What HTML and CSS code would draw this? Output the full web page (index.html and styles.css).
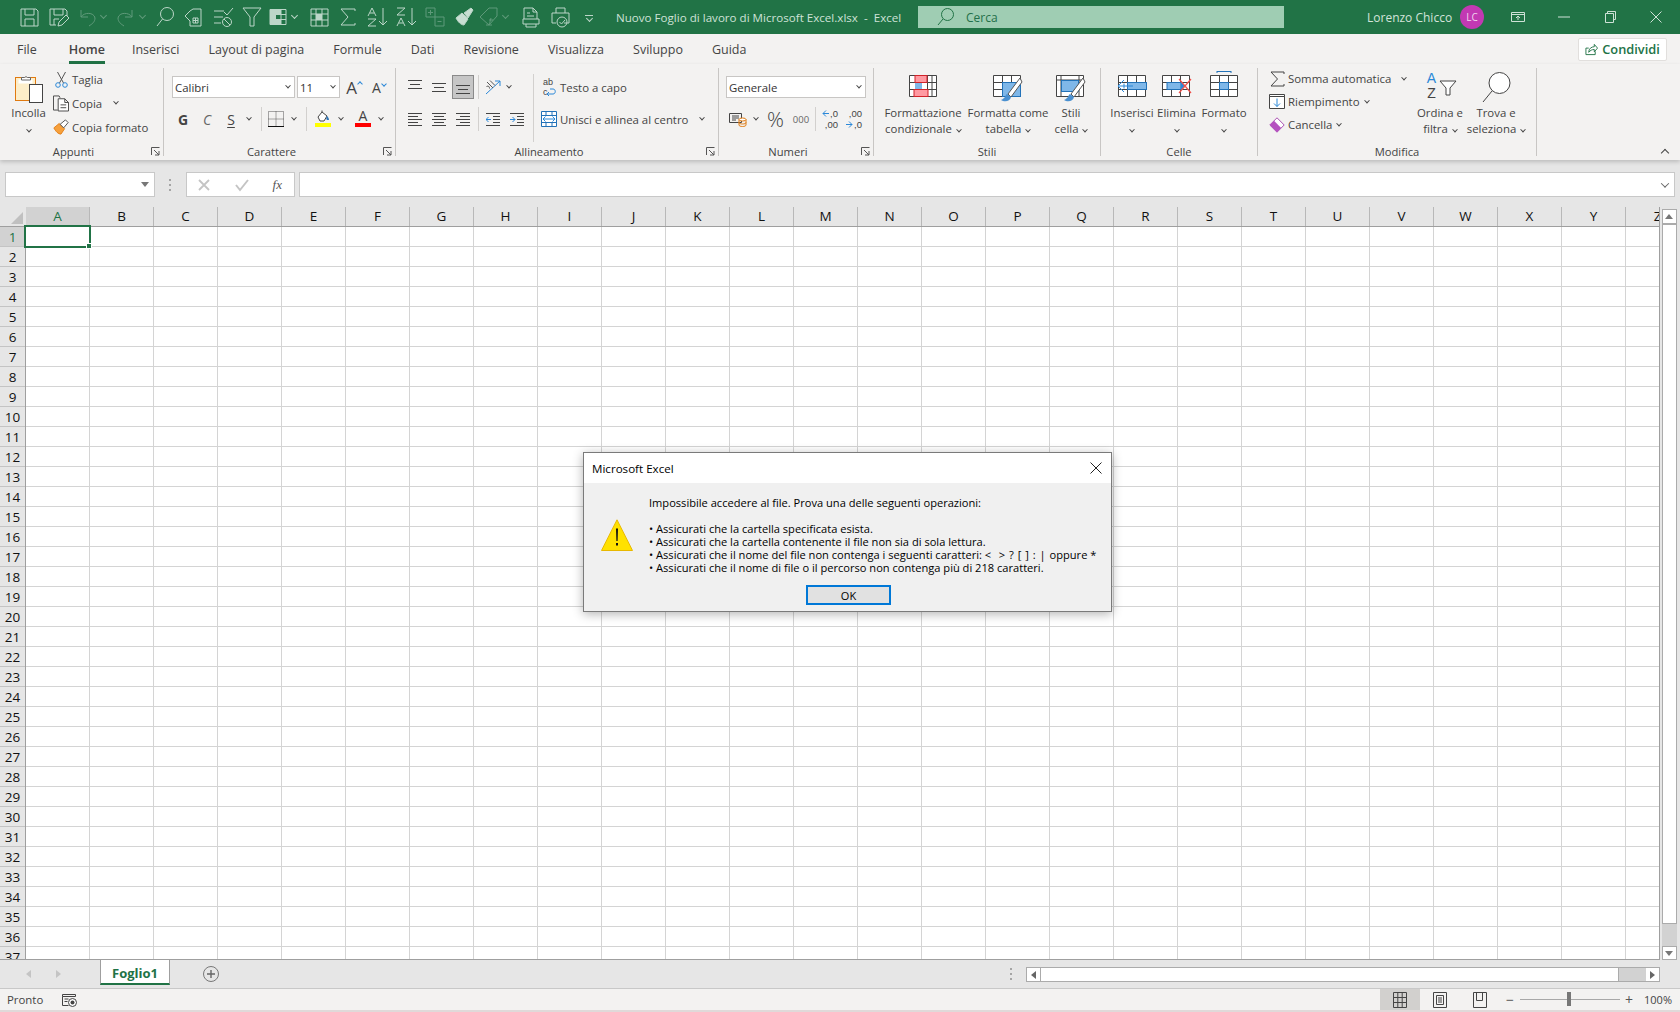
FILE: index.html
```html
<!DOCTYPE html>
<html lang="it">
<head>
  <meta charset="UTF-8" />
  <title>Nuovo Foglio di lavoro di Microsoft Excel.xlsx - Excel</title>
  <link rel="stylesheet" href="styles.css">
</head>
<body>

<!-- Title bar -->
<header class="titlebar">
  <div class="qat">
    <svg class="q" viewBox="0 0 24 24"><path d="M4 4h15l2 2v15H4z M8 4v6h9V4 M8 21v-7h9v7"/></svg>
    <svg class="q" viewBox="0 0 24 24"><path d="M4 20V4h15l2 2v5 M8 4v6h9V4 M8 20v-6h5 M4 20h6 M12 21l1-4 7-7 3 3-7 7z"/></svg>
    <svg class="q dim" viewBox="0 0 24 24"><path d="M6 5v7h7 M6 12c3-5 13-5 14 1 0 4-3 6-6 8"/></svg><span class="qd dim"></span>
    <svg class="q dim" viewBox="0 0 24 24"><path d="M18 5v7h-7 M18 12C15 7 5 7 4 13c0 4 3 6 6 8"/></svg><span class="qd dim"></span>
    <svg class="q" viewBox="0 0 24 24"><circle cx="14" cy="9" r="6.500"/><path d="M9.500 14 4 21"/></svg>
    <svg class="q" viewBox="0 0 24 24"><path d="M11 4h8v17H8v-5L3 11l5-5z M11 13h5v5h-5z M13.500 13v5 M11 15.500h5"/></svg>
    <svg class="q" viewBox="0 0 24 24"><path d="M3 6h10 M3 12h9 M3 18h7 M13 7l3 3 6-7"/><circle cx="16" cy="17" r="4.500"/><path d="M13 14l6 6"/></svg>
    <svg class="q" viewBox="0 0 24 24"><path d="M3 3h18l-7 9v9h-4v-9z"/></svg>
    <svg class="q ml-n3" viewBox="0 0 24 24"><path d="M4 4.500h16v15H4z M9.500 4.500v15 M15 4.500v15 M4 9.500h16 M4 14.500h16"/><path class="fill-s" d="M4 4.500h5.500v15H4z M9.500 4.500H15v5H9.500z M9.500 14.500H15v5H9.500z"/></svg><span class="qd"></span>
    <svg class="q ml-2" viewBox="0 0 24 24"><path d="M4 4h17v17H4z M4 9h17 M4 15h17 M9 4v17 M15 4v17"/><path class="fill-s" d="M9 9h6v6H9z"/></svg>
    <svg class="q" viewBox="0 0 24 24"><path d="M19 6V4H5l7 8-7 8h14v-2"/></svg>
    <svg class="q" viewBox="0 0 24 24"><path d="M18 3v17 M14 16l4 4 4-4 M5 8h4 M3 11l4-8 4 8 M3 14h8l-8 7h8"/></svg>
    <svg class="q" viewBox="0 0 24 24"><path d="M18 3v17 M14 16l4 4 4-4 M3 3h8l-8 7h8 M3 21l4-8 4 8 M5 18h4"/></svg>
    <svg class="q dim" viewBox="0 0 24 24"><path d="M3 3h9v9H3z M12 12h9v9h-9z M7.500 5v5 M5 7.500h5 M14.500 16.500h4"/></svg>
    <svg class="q" viewBox="0 0 24 24"><path class="fill" d="M4 13l6-5 6 6-4 6c-3 0-6-3-8-7z"/><path class="fill" d="M12 8l7-5 2 2-5 8z"/></svg>
    <svg class="q ml-n4 dim" viewBox="0 0 24 24"><path d="M3 12l9-9h8v8l-8 9z M9 20h6 M14 13c-1 3-1 6-3 7 M12 15h4"/></svg><span class="qd dim"></span>
    <svg class="q ml-3" viewBox="0 0 24 24"><path d="M5 14V3h9l4 4v7 M14 3v4h4 M8 11h7 M8 8h3 M4 14h16v5H4z M7 19v3h10v-3"/></svg>
    <svg class="q" viewBox="0 0 24 24"><path d="M8 8V3h9v5 M4 8h17v10h-5 M8 18H4V8"/><circle cx="14" cy="17" r="5"/><path d="M11.500 17l2 2 3.500-4"/></svg>
    <span class="qd more"></span>
  </div>
  <div class="doc-name">Nuovo Foglio di lavoro di Microsoft Excel.xlsx&nbsp; -&nbsp; Excel</div>
  <div class="searchbox">
    <svg class="search-ico" viewBox="0 0 20 20"><circle cx="11.500" cy="7.500" r="6"/><path d="M7 12l-5 6"/></svg>
    <span>Cerca</span>
  </div>
  <div class="user">Lorenzo Chicco</div>
  <div class="avatar">LC</div>
  <div class="win-btns">
    <svg class="w" viewBox="0 0 14 14"><path d="M.500 2.500h13v9H.500z M.500 4.500h13 M7 10V6.500 M5 8l2-2 2 2"/></svg>
    <svg class="w" viewBox="0 0 14 14"><path d="M1 7h12"/></svg>
    <svg class="w" viewBox="0 0 14 14"><path d="M2.500 3.500h8v9h-8z M4.500 3.500v-2h8v8h-2"/></svg>
    <svg class="w" viewBox="0 0 14 14"><path d="M1.500 1.500l11 11 M12.500 1.500l-11 11"/></svg>
  </div>
</header>

<!-- Tabs -->
<nav class="tabs">
  <a>File</a>
  <a class="active">Home</a>
  <a>Inserisci</a>
  <a>Layout di pagina</a>
  <a>Formule</a>
  <a>Dati</a>
  <a>Revisione</a>
  <a>Visualizza</a>
  <a>Sviluppo</a>
  <a>Guida</a>
  <button class="share">
    <svg viewBox="0 0 14 14"><path d="M1 5.500v7h10V9 M1 5.500h3 M4 10c0-4 3-6 6-6V1.500l3.500 4-3.500 4V7c-3 0-4 1-6 3z"/></svg>
    Condividi
  </button>
</nav>

<!-- Ribbon -->
<section class="ribbon">

  <div class="group g-appunti">
    <div class="group-body">
      <div class="big w-incolla">
        <div class="big-icon top-5">
          <svg width="28" height="30" viewBox="0 0 28 30"><rect x=".5" y="4.500" width="20" height="23" fill="#fdeec9" stroke="#e07a10"/><rect x="3.500" y="6.500" width="14" height="4" fill="#fff"/><path d="M6.500 7V4.500h3a2 2 0 0 1 3 0h3V7z" fill="#fff" stroke="#666"/><rect x="14.500" y="11.500" width="13" height="18" fill="#fff" stroke="#444"/></svg>
        </div>
        <div class="big-label">Incolla</div>
        <div class="big-label"><i class="dd"></i></div>
      </div>
      <div class="small-rows rows-24">
        <div class="small"><span class="small-ico"><svg width="13" height="17" viewBox="0 0 13 17"><path d="M2.500 1l6 11 M10.500 1l-6 11" fill="none" stroke="#555"/><circle cx="3" cy="14" r="2.300" fill="none" stroke="#2b88d8"/><circle cx="10" cy="14" r="2.300" fill="none" stroke="#2b88d8"/></svg></span>Taglia</div>
        <div class="small"><span class="small-ico"><svg width="17" height="18" viewBox="0 0 17 18"><path d="M5 16.500H.5V1.500h6l1 2" fill="none" stroke="#444"/><path d="M5.500 4.500h7l4 4v9h-11z M12.500 4.500v4h4 M8 11h6 M8 14h6" fill="#fff" stroke="#444" stroke-width="1"/></svg></span>Copia<i class="dd ml-12"></i></div>
        <div class="small"><span class="small-ico"><svg width="18" height="18" viewBox="0 0 18 18"><path d="M1 10l6-5 6 6-4 6C6 17 3 14 1 10z" fill="#f6a03c" stroke="#e07a10"/><path d="M8 6l6-5 3 3-5 6z" fill="#fff" stroke="#444"/></svg></span>Copia formato</div>
      </div>
    </div>
    <div class="group-label lab-left">Appunti</div>
    <svg class="launcher" viewBox="0 0 9 9"><path d="M.500 8V.500H8.500 M3 3l5 5 M8 4v4H4"/></svg>
  </div>

  <div class="group g-carattere">
    <div class="group-body stacked">
      <div class="tool-row row-top">
        <div class="combo w-font"><span>Calibri</span><i class="dd"></i></div>
        <div class="combo w-size"><span>11</span><i class="dd"></i></div>
        <div class="tool font-grow">A<sup class="caret up"></sup></div>
        <div class="tool font-shrink">A<sup class="caret"></sup></div>
      </div>
      <div class="tool-row row-font">
        <div class="tool bold">G</div>
        <div class="tool plain">C</div>
        <div class="tool under">S</div>
        <div class="dd-cell"><i class="dd"></i></div>
        <div class="sep"></div>
        <div class="tool"><svg width="16" height="16" viewBox="0 0 16 16"><path d="M.5.500h15v15H.5z M8 .5v15 M.5 8h15" fill="none" stroke="#555" stroke-dasharray="1 1"/><path d="M0 15.500h16" stroke="#111"/></svg></div>
        <div class="dd-cell"><i class="dd"></i></div>
        <div class="sep"></div>
        <div class="tool color-tool sp2"><svg width="16" height="13" viewBox="0 0 16 13"><path d="M3 7l4-5 5 4-3 5H5z" fill="#fff" stroke="#444"/><path d="M7 2V.5" stroke="#444"/><path d="M12 6c1 1 2 2 2 4h-2c-1-1-1-2 0-4z" fill="#2e75b6"/></svg><i class="bar yellow"></i></div>
        <div class="dd-cell"><i class="dd"></i></div>
        <div class="tool color-tool sp"><span class="a-letter">A</span><i class="bar red"></i></div>
        <div class="dd-cell"><i class="dd"></i></div>
      </div>
    </div>
    <div class="group-label lab-left">Carattere</div>
    <svg class="launcher" viewBox="0 0 9 9"><path d="M.500 8V.500H8.500 M3 3l5 5 M8 4v4H4"/></svg>
  </div>

  <div class="group g-allinea">
    <div class="group-body">
      <div class="stacked w-align-left">
        <div class="tool-row row-top">
          <div class="tool"><svg class="lines" viewBox="0 0 14 14"><path d="M0 .5h14 M2 4.500h10 M0 8.500h14"/></svg></div>
          <div class="tool"><svg class="lines" viewBox="0 0 14 14"><path d="M0 3.500h14 M2 7.500h10 M0 11.500h14"/></svg></div>
          <div class="tool on"><svg class="lines" viewBox="0 0 14 14"><path d="M0 5.500h14 M2 9.500h10 M0 13.500h14"/></svg></div>
          <div class="sep"></div>
          <div class="tool orient"><svg width="17" height="17" viewBox="0 0 17 17"><path d="M1 15L15 2 M10 2h5v5" fill="none" stroke="#2b88d8"/><path d="M2 3l6 6 M5 1.500l5 5 M1.500 7.500c2-1 3 0 3 2" fill="none" stroke="#555"/></svg></div>
          <div class="dd-cell pull"><i class="dd"></i></div>
        </div>
        <div class="tool-row row-font">
          <div class="tool"><svg class="lines" viewBox="0 0 14 14"><path d="M0 1.500h14 M0 4.500h10 M0 7.500h14 M0 10.500h10 M0 13.500h14"/></svg></div>
          <div class="tool"><svg class="lines" viewBox="0 0 14 14"><path d="M0 1.500h14 M2 4.500h10 M0 7.500h14 M2 10.500h10 M0 13.500h14"/></svg></div>
          <div class="tool"><svg class="lines" viewBox="0 0 14 14"><path d="M0 1.500h14 M4 4.500h10 M0 7.500h14 M4 10.500h10 M0 13.500h14"/></svg></div>
          <div class="sep"></div>
          <div class="tool"><svg class="lines" viewBox="0 0 14 14"><path d="M0 1.500h14 M7 4.500h7 M7 7.500h7 M7 10.500h7 M0 13.500h14"/><path class="blue" d="M5 7.500H0 M2.500 5l-2.500 2.500 2.500 2.500"/></svg></div>
          <div class="tool"><svg class="lines" viewBox="0 0 14 14"><path d="M0 1.500h14 M7 4.500h7 M7 7.500h7 M7 10.500h7 M0 13.500h14"/><path class="blue" d="M0 7.500h5 M2.500 5l2.500 2.500-2.500 2.500"/></svg></div>
        </div>
      </div>
      <div class="sep tall"></div>
      <div class="stacked wrap-col">
        <div class="tool-row row-top">
          <span class="small-ico wrap-ico"><span class="tiny-stack"><span>ab</span><span>c</span></span><svg width="10" height="10" viewBox="0 0 10 10"><path d="M0 7h6c3 0 3-5 0-5H3 M2 5L0 7l2 2" fill="none" stroke="#2b88d8"/></svg></span>Testo a capo
        </div>
        <div class="tool-row row-font">
          <span class="small-ico"><svg width="16" height="16" viewBox="0 0 16 16"><path d="M.5.500h15v15H.5z M.5 4.500h15 M.5 11.500h15 M5 .5v4 M11 .5v4 M5 11.500v4 M11 11.500v4" fill="#fff" stroke="#2272b8"/><path d="M2 8h12 M4.500 5.500L2 8l2.500 2.500 M11.500 5.500L14 8l-2.500 2.500" fill="none" stroke="#2b88d8"/></svg></span>Unisci e allinea al centro<i class="dd ml-12"></i>
        </div>
      </div>
    </div>
    <div class="group-label lab-left">Allineamento</div>
    <svg class="launcher" viewBox="0 0 9 9"><path d="M.500 8V.500H8.500 M3 3l5 5 M8 4v4H4"/></svg>
  </div>

  <div class="group g-numeri">
    <div class="group-body stacked">
      <div class="tool-row row-top">
        <div class="combo w-num"><span>Generale</span><i class="dd"></i></div>
      </div>
      <div class="tool-row row-font">
        <div class="tool"><svg width="18" height="16" viewBox="0 0 18 16"><path d="M.5 2.500h12v9H.5z" fill="none" stroke="#444"/><path d="M3 5h7 M3 7h7 M3 9h4" stroke="#444"/><ellipse cx="13.500" cy="8.500" rx="3.500" ry="1.500" fill="#fff" stroke="#e07a10"/><path d="M10 8.500v5.500c0 2 7 2 7 0V8.500 M10 11.500c0 2 7 2 7 0" fill="none" stroke="#e07a10"/></svg></div>
        <div class="dd-cell"><i class="dd"></i></div>
        <div class="tool pct">%</div>
        <div class="tool thousand">000</div>
        <div class="sep"></div>
        <div class="tool dec-tool">
          <div class="dec-row"><svg width="7" height="7" viewBox="0 0 7 7"><path d="M7 3.500H1 M4 .5l-3 3 3 3" fill="none" stroke="#2b88d8"/></svg><span>,0</span></div>
          <div class="dec-row"><span>,00</span></div>
        </div>
        <div class="tool dec-tool">
          <div class="dec-row"><span>,00</span></div>
          <div class="dec-row"><svg width="7" height="7" viewBox="0 0 7 7"><path d="M0 3.500h6 M3 .5l3 3-3 3" fill="none" stroke="#2b88d8"/></svg><span>,0</span></div>
        </div>
      </div>
    </div>
    <div class="group-label lab-left">Numeri</div>
    <svg class="launcher" viewBox="0 0 9 9"><path d="M.500 8V.500H8.500 M3 3l5 5 M8 4v4H4"/></svg>
  </div>

  <div class="group g-stili">
    <div class="group-body">
      <div class="big w-80">
        <div class="big-icon">
          <svg width="28" height="22" viewBox="0 0 28 22"><path d="M.5.500h27v21H.5z M9.500.5v21 M18.500.5v21 M23 .5v21 M.5 7.500h27 M.5 14.500h27" fill="#fff" stroke="#444"/><rect x="6" y=".5" width="12" height="7" fill="#ff9aa2" stroke="#d2232a"/><rect x="5" y="14.500" width="14" height="7" fill="#ff9aa2" stroke="#d2232a"/><rect x="6" y="8" width="7" height="6" fill="#7fb7e8"/></svg>
        </div>
        <div class="big-label">Formattazione</div>
        <div class="big-label">condizionale<i class="dd ml-4"></i></div>
      </div>
      <div class="big w-86">
        <div class="big-icon">
          <svg width="30" height="29" viewBox="0 0 30 29"><path d="M.5.500h27v21H.5z M9.500.5v21 M18.500.5v21 M.5 7.500h27 M.5 14.500h27" fill="#fff" stroke="#444"/><rect x="9.500" y="7.500" width="18" height="14" fill="#7fb7e8" stroke="#2272b8"/><path d="M27 3L15 19l3 3 11-15z" fill="#fff" stroke="#555"/><path d="M14 19c-2 1-1 4-6 6 3 2 9 2 10-3z" fill="#4a90d0"/></svg>
        </div>
        <div class="big-label">Formatta come</div>
        <div class="big-label">tabella<i class="dd ml-4"></i></div>
      </div>
      <div class="big w-40">
        <div class="big-icon">
          <svg width="30" height="29" viewBox="0 0 30 29"><path d="M.5.500h27v21H.5z M.5 5h27 M23 .5v21 M5 .5v21" fill="#fff" stroke="#444"/><rect x="5.500" y="5.500" width="17" height="11" fill="#7fb7e8" stroke="#2272b8"/><path d="M27 3L15 19l3 3 11-15z" fill="#fff" stroke="#555"/><path d="M14 19c-2 1-1 4-6 6 3 2 9 2 10-3z" fill="#4a90d0"/></svg>
        </div>
        <div class="big-label">Stili</div>
        <div class="big-label">cella<i class="dd ml-4"></i></div>
      </div>
    </div>
    <div class="group-label">Stili</div>
  </div>

  <div class="group g-celle">
    <div class="group-body">
      <div class="big w-44">
        <div class="big-icon">
          <svg width="30" height="22" viewBox="0 0 30 22"><path d="M1.500.5h27v21h-27z M10.500.5v21 M19.500.5v21 M1.500 7.500h27 M1.500 14.500h27" fill="#fff" stroke="#444"/><rect x="10.500" y="7.500" width="19" height="7" fill="#7fb7e8" stroke="#2272b8"/><path d="M16 11H1 M7 5l-6 6 6 6 M7 8.500v5" fill="none" stroke="#2b88d8"/></svg>
        </div>
        <div class="big-label">Inserisci</div>
        <div class="big-label"><i class="dd"></i></div>
      </div>
      <div class="big w-45">
        <div class="big-icon">
          <svg width="30" height="22" viewBox="0 0 30 22"><path d="M.5.500h27v21H.5z M9.500.5v21 M18.500.5v21 M.5 7.500h27 M.5 14.500h27" fill="#fff" stroke="#444"/><rect x="5" y="7.500" width="14" height="7" fill="#7fb7e8" stroke="#2272b8"/><path d="M19 7l4 4-4 4z" fill="#2b88d8"/><path d="M17 4l12 14 M29 4L17 18" stroke="#f0504a" stroke-width="1.200" fill="none"/></svg>
        </div>
        <div class="big-label">Elimina</div>
        <div class="big-label"><i class="dd"></i></div>
      </div>
      <div class="big w-50">
        <div class="big-icon top-3">
          <svg width="28" height="26" viewBox="0 0 28 26"><path d="M7 .5h14 M7 0v2 M21 0v2" stroke="#2272b8" fill="none"/><path d="M.5 4.500h27v21H.5z M9.500 4.500v21 M18.500 4.500v21 M.5 11.500h27 M.5 18.500h27" fill="#fff" stroke="#444"/><rect x="9.500" y="11.500" width="9" height="7" fill="#7fb7e8" stroke="#2272b8"/></svg>
        </div>
        <div class="big-label">Formato</div>
        <div class="big-label"><i class="dd"></i></div>
      </div>
    </div>
    <div class="group-label">Celle</div>
  </div>

  <div class="group g-modifica">
    <div class="group-body">
      <div class="small-rows rows-23">
        <div class="small"><span class="small-ico"><svg width="15" height="16" viewBox="0 0 15 16"><path d="M14 3V1H1l6.500 7L1 15h13v-2" fill="none" stroke="#444"/></svg></span>Somma automatica<i class="dd ml-11"></i></div>
        <div class="small"><span class="small-ico"><svg width="16" height="15" viewBox="0 0 16 15"><path d="M.5 2.500v12h15v-12z M.5 .5h15v2H.5z" fill="#fff" stroke="#444"/><path d="M8 4.500v8 M5 9.500l3 3 3-3" fill="none" stroke="#2b88d8"/></svg></span>Riempimento<i class="dd ml-4"></i></div>
        <div class="small"><span class="small-ico"><svg width="16" height="16" viewBox="0 0 16 16"><path d="M8 .8L15.200 8 8 15.200 .8 8z" fill="#fff" stroke="#a94fb3"/><path d="M5 3.800L12.200 11 8 15.200 .8 8z" fill="#b552c0"/></svg></span>Cancella<i class="dd ml-4"></i></div>
      </div>
      <div class="big w-50">
        <div class="big-icon top-4 sort-ico">
          <div class="az"><span class="az-a">A</span><span>Z</span></div>
          <svg width="18" height="18" viewBox="0 0 18 18"><path d="M1 3h16l-6 7v7H7v-7z" fill="#fff" stroke="#444"/></svg>
        </div>
        <div class="big-label">Ordina e</div>
        <div class="big-label">filtra<i class="dd ml-4"></i></div>
      </div>
      <div class="big w-62">
        <div class="big-icon top-4">
          <svg width="30" height="30" viewBox="0 0 30 30"><circle cx="18.500" cy="11" r="10.500" fill="#fff" stroke="#444"/><path d="M11 19L2 30" stroke="#444" fill="none"/></svg>
        </div>
        <div class="big-label">Trova e</div>
        <div class="big-label">seleziona<i class="dd ml-4"></i></div>
      </div>
    </div>
    <div class="group-label">Modifica</div>
  </div>

  <div class="collapse"><i class="dd flip"></i></div>
</section>

<!-- Formula bar -->
<div class="formula-bar">
  <div class="name-box"><i class="tri"></i></div>
  <div class="grip"></div>
  <div class="fx-box">
    <svg width="14" height="14" viewBox="0 0 14 14"><path d="M2 2l10 10 M12 2L2 12" stroke="#c4c4c4" stroke-width="1.800"/></svg>
    <svg width="16" height="14" viewBox="0 0 16 14"><path d="M2 7l4 5 8-10" stroke="#c4c4c4" stroke-width="2" fill="none"/></svg>
    <span class="fx">fx</span>
  </div>
  <div class="formula-input"><i class="dd dark"></i></div>
</div>

<!-- Sheet -->
<div class="sheet-wrap">
  <div class="sheet">
    <div class="col-headers">
      <div class="corner"><i></i></div>
      <div class="col sel">A</div><div class="col">B</div><div class="col">C</div><div class="col">D</div><div class="col">E</div><div class="col">F</div><div class="col">G</div><div class="col">H</div><div class="col">I</div><div class="col">J</div><div class="col">K</div><div class="col">L</div><div class="col">M</div><div class="col">N</div><div class="col">O</div><div class="col">P</div><div class="col">Q</div><div class="col">R</div><div class="col">S</div><div class="col">T</div><div class="col">U</div><div class="col">V</div><div class="col">W</div><div class="col">X</div><div class="col">Y</div><div class="col">Z</div>
    </div>
    <div class="sheet-body">
      <div class="row-headers">
        <div class="row sel">1</div><div class="row">2</div><div class="row">3</div><div class="row">4</div><div class="row">5</div><div class="row">6</div><div class="row">7</div><div class="row">8</div><div class="row">9</div><div class="row">10</div><div class="row">11</div><div class="row">12</div><div class="row">13</div><div class="row">14</div><div class="row">15</div><div class="row">16</div><div class="row">17</div><div class="row">18</div><div class="row">19</div><div class="row">20</div><div class="row">21</div><div class="row">22</div><div class="row">23</div><div class="row">24</div><div class="row">25</div><div class="row">26</div><div class="row">27</div><div class="row">28</div><div class="row">29</div><div class="row">30</div><div class="row">31</div><div class="row">32</div><div class="row">33</div><div class="row">34</div><div class="row">35</div><div class="row">36</div><div class="row">37</div>
      </div>
      <div class="cells">
        <div class="cursor"><i></i></div>
      </div>
    </div>
  </div>
  <div class="vscroll">
    <div class="sb-btn"><i class="tri up"></i></div>
    <div class="sb-thumb"></div>
    <div class="sb-track"></div>
    <div class="sb-btn"><i class="tri"></i></div>
  </div>
</div>

<!-- Sheet tabs -->
<div class="sheet-tabs">
  <div class="nav-arrows"><i class="arrow left"></i><i class="arrow right"></i></div>
  <div class="sheet-tab">Foglio1</div>
  <div class="add-sheet"><svg width="16" height="16" viewBox="0 0 16 16"><circle cx="8" cy="8" r="7.500" fill="none" stroke="#777"/><path d="M4 8h8 M8 4v8" stroke="#666" stroke-width="1.400"/></svg></div>
  <div class="grip tabs-grip"></div>
  <div class="hscroll">
    <div class="hs-btn"><i class="arrow left dark"></i></div>
    <div class="hs-thumb"></div>
    <div class="hs-track"></div>
    <div class="hs-btn"><i class="arrow right dark"></i></div>
  </div>
</div>

<!-- Status bar -->
<footer class="statusbar">
  <span class="status-text">Pronto</span>
  <svg class="macro" width="15" height="14" viewBox="0 0 15 14"><path d="M.5 1.500h13v2H.5z M.5 3.500v9h6" fill="none" stroke="#444"/><path d="M2.500 6h4 M2.500 8.500h3" stroke="#444"/><circle cx="10.500" cy="9.500" r="4" fill="#fff" stroke="#444"/><circle cx="10.500" cy="9.500" r="2" fill="#444"/></svg>
  <div class="views">
    <div class="view on"><svg width="14" height="16" viewBox="0 0 14 16"><path d="M.5.500h13v15H.5z M.5 5.500h13 M.5 10.500h13 M4.800.5v15 M9.200.5v15" fill="none" stroke="#444"/></svg></div>
    <div class="view"><svg width="14" height="16" viewBox="0 0 14 16"><path d="M.5.500h13v15H.5z" fill="none" stroke="#444"/><path d="M3.500 3.500h7v9h-7z M5 6h4 M5 8h4 M5 10h4" fill="none" stroke="#444"/></svg></div>
    <div class="view"><svg width="14" height="16" viewBox="0 0 14 16"><path d="M.5.500h13v15H.5z M3.500.5v8h6V.5" fill="none" stroke="#444"/></svg></div>
  </div>
  <div class="zoom">
    <span class="z-sign">−</span>
    <div class="z-track"><i></i></div>
    <span class="z-sign plus">+</span>
    <span class="z-pct">100%</span>
  </div>
</footer>
<div class="desktop-edge"></div>

<!-- Error dialog -->
<div class="dialog">
  <div class="dialog-title">
    <span>Microsoft Excel</span>
    <svg width="12" height="12" viewBox="0 0 12 12"><path d="M.5.500l11 11 M11.500.5l-11 11" stroke="#222" fill="none"/></svg>
  </div>
  <div class="dialog-body">
    <svg class="warn" width="32" height="32" viewBox="0 0 32 32"><path d="M16 .8L31.500 31.500H.5z" fill="#ffe100" stroke="#e8b800" stroke-linejoin="round"/><path d="M15 9.500h2l-.4 12.500h-1.200z" fill="#111"/><rect x="15" y="24" width="2" height="2.500" fill="#111"/></svg>
    <div class="dialog-text">
      <p class="lead">Impossibile accedere al file. Prova una delle seguenti operazioni:</p>
      <p>• Assicurati che la cartella specificata esista.</p>
      <p>• Assicurati che la cartella contenente il file non sia di sola lettura.</p>
      <p>• Assicurati che il nome del file non contenga i seguenti caratteri: <span class="glyphs">&lt;&nbsp; &gt; ? [ ] : | </span>oppure *</p>
      <p>• Assicurati che il nome di file o il percorso non contenga più di 218 caratteri.</p>
    </div>
  </div>
  <div class="dialog-foot"><button class="ok">OK</button></div>
</div>

</body>
</html>
```

FILE: styles.css
```css
* { box-sizing: border-box; }
html, body { height: 100%; }
body {
  margin: 0;
  position: relative;
  display: flex;
  flex-direction: column;
  overflow: hidden;
  font-family: "Open Sans", "Noto Sans", sans-serif;
  font-size: 12px;
  color: #444;
  background: #e6e6e6;
}
i { display: inline-block; }

/* Title bar */
.titlebar {
  height: 34px;
  flex: none;
  display: flex;
  align-items: center;
  background: #217346;
  color: #d3e3da;
}
.qat {
  width: 616px;
  flex: none;
  display: flex;
  align-items: center;
  padding-left: 17px;
}
.q {
  width: 24px;
  height: 24px;
  margin-right: 5px;
  flex: none;
  fill: none;
  stroke: #bcd6c8;
  stroke-width: 1;
}
.q.dim { stroke: #5f9a7a; }
.q .fill { fill: #c9dfd3; }
.q .fill-s { fill: #bcd6c8; stroke: none; }
.ml-n3 { margin-left: -3px; }
.ml-n4 { margin-left: -4px; }
.ml-2 { margin-left: 2px; }
.ml-3 { margin-left: 3px; }
.qd {
  width: 10px;
  height: 5px;
  margin: 0 6px 0 -6px;
  flex: none;
  position: relative;
}
.qd::after {
  content: "";
  position: absolute;
  left: 3px;
  top: -2px;
  width: 4px;
  height: 4px;
  border-right: 1px solid #bcd6c8;
  border-bottom: 1px solid #bcd6c8;
  transform: rotate(45deg);
}
.qd.dim::after { border-color: #5f9a7a; }
.qd.more {
  width: 8px;
  margin-left: 8px;
  border-top: 1px solid #bcd6c8;
}
.qd.more::after { left: 2px; top: 0; }
.doc-name {
  width: 302px;
  flex: none;
  font-size: 11.600px;
  white-space: nowrap;
  color: #cfe2d7;
}
.searchbox {
  width: 366px;
  height: 22px;
  flex: none;
  display: flex;
  align-items: center;
  gap: 10px;
  padding-left: 18px;
  background: #9fcdb3;
  color: #23704a;
}
.search-ico {
  width: 20px;
  height: 20px;
  fill: none;
  stroke: #217346;
}
.user {
  margin-left: 83px;
  width: 93px;
  flex: none;
  white-space: nowrap;
}
.avatar {
  width: 24px;
  height: 24px;
  flex: none;
  border-radius: 50%;
  background: #c239b3;
  color: #f0d6ed;
  font-size: 10px;
  text-align: center;
  line-height: 24px;
}
.win-btns {
  display: flex;
  gap: 32px;
  margin-left: 27px;
}
.w {
  width: 14px;
  height: 14px;
  fill: none;
  stroke: #cfe2d7;
}

/* Tabs */
.tabs {
  height: 30px;
  flex: none;
  display: flex;
  align-items: center;
  gap: 29px;
  padding: 0 13px 0 17px;
  background: #f3f2f1;
  font-size: 12.500px;
}
.tabs a {
  height: 30px;
  line-height: 32px;
  white-space: nowrap;
}
.tabs a.active {
  margin-left: 3px;
  margin-right: -2px;
  font-weight: 600;
  color: #444;
  border-bottom: 3px solid #217346;
}
.share {
  margin-left: auto;
  width: 89px;
  height: 23px;
  display: flex;
  align-items: center;
  justify-content: center;
  gap: 4px;
  padding: 0;
  background: #fff;
  border: 1px solid #e1dfdd;
  border-radius: 2px;
  color: #217346;
  font: 600 12.800px "Open Sans", sans-serif;
}
.share svg {
  width: 13px;
  height: 13px;
  fill: none;
  stroke: #217346;
}

/* Ribbon */
.ribbon {
  height: 96px;
  flex: none;
  position: relative;
  display: flex;
  padding-top: 4px;
  background: #f3f2f1;
  box-shadow: 0 2px 4px rgba(0,0,0,0.18);
  z-index: 2;
}
.group {
  position: relative;
  height: 88px;
  flex: none;
  display: flex;
  flex-direction: column;
  border-right: 1px solid #c8c6c4;
}
.g-appunti { width: 164px; }
.g-carattere { width: 232px; }
.g-allinea { width: 323px; }
.g-numeri { width: 155px; }
.g-stili { width: 227px; }
.g-celle { width: 157px; }
.g-modifica { width: 279px; }
.group-body {
  height: 76px;
  display: flex;
  white-space: nowrap;
  font-size: 11.400px;
}
.g-appunti .group-body { padding-left: 11px; }
.g-carattere .group-body { padding-left: 8px; }
.g-allinea .group-body { padding-left: 7px; }
.g-numeri .group-body { padding-left: 7px; }
.g-stili .group-body, .g-celle .group-body { padding-left: 9px; }
.g-modifica .group-body { padding-left: 11px; }
.group-label {
  height: 12px;
  line-height: 16px;
  text-align: center;
  font-size: 11.200px;
}
.lab-left { padding-right: 16px; }
.launcher {
  position: absolute;
  right: 3px;
  bottom: 0;
  width: 9px;
  height: 9px;
  fill: none;
  stroke: #555;
}

.big {
  display: flex;
  flex-direction: column;
  align-items: center;
  flex: none;
}
.big-icon {
  height: 37px;
  padding-top: 7px;
  display: flex;
  justify-content: center;
}
.big-icon.top-5 { padding-top: 5px; }
.big-icon.top-4 { padding-top: 4px; }
.big-icon.top-3 { padding-top: 3px; }
.big-label {
  height: 16px;
  line-height: 16px;
}
.w-incolla { width: 35px; }
.w-80 { width: 80px; }
.w-86 { width: 86px; margin-left: 2px; }
.w-40 { width: 40px; }
.w-44 { width: 44px; }
.w-45 { width: 45px; }
.w-50 { width: 50px; }
.w-62 { width: 62px; }

.small-rows {
  display: flex;
  flex-direction: column;
  flex: none;
  margin-top: -1px;
}
.rows-24 { margin-left: 7px; }
.rows-24 .small { height: 24px; }
.rows-23 { width: 146px; }
.rows-23 .small { height: 23px; }
.small { display: flex; align-items: center; }
.small-ico {
  width: 16px;
  margin-right: 3px;
  display: flex;
  justify-content: center;
  flex: none;
}
.wrap-ico { position: relative; height: 20px; justify-content: flex-start; }
.wrap-ico svg { position: absolute; left: 6px; bottom: 0; }
.tiny-stack {
  display: flex;
  flex-direction: column;
  margin-left: 2px;
  font: 9px/10px "Liberation Sans", sans-serif;
}

.dd {
  width: 4px;
  height: 4px;
  border-right: 1px solid #444;
  border-bottom: 1px solid #444;
  transform: rotate(45deg) translate(-1px, -1px);
}
.dd.flip { transform: rotate(225deg); width: 6px; height: 6px; }
.dd.dark { border-color: #666; width: 6px; height: 6px; }
.ml-4 { margin-left: 5px; }
.ml-11 { margin-left: 11px; }
.ml-12 { margin-left: 12px; }

.stacked { display: flex; flex-direction: column; }
.tool-row {
  height: 24px;
  display: flex;
  align-items: center;
  flex: none;
}
.row-top { margin: 8px 0 9px; height: 22px; }
.row-font { margin-left: -1px; }
.wrap-col .row-font, .w-align-left .row-font { margin-left: 0; }
.g-numeri .row-font { margin-left: 0; }
.tool {
  width: 24px;
  height: 24px;
  flex: none;
  display: flex;
  align-items: center;
  justify-content: center;
  font-size: 14px;
}
.tool.sp { margin-left: 4px; }
.tool.sp2 { margin-left: 2px; }
.tool.on {
  width: 22px;
  margin: 0 1px;
  background: #c6c6c6;
  border: 1px solid #8a8a8a;
}
.dd-cell {
  width: 12px;
  flex: none;
  display: flex;
  align-items: center;
  justify-content: center;
}
.dd-cell.pull { margin-left: -2px; }
.sep {
  width: 1px;
  height: 24px;
  margin: 0 2px 0 6px;
  flex: none;
  background: #d2d0ce;
}
.sep.tall { height: 68px; margin: 6px 7px 0 0; }
.w-align-left { width: 130px; }
.w-align-left .sep { margin-left: 3px; }
.g-numeri .sep { margin-left: 2px; }

.color-tool {
  position: relative;
  flex-direction: column;
  justify-content: flex-start;
}
.color-tool svg { margin-top: 3px; }
.bar {
  position: absolute;
  left: 4px;
  top: 16px;
  width: 16px;
  height: 4px;
}
.bar.yellow { background: #ffff00; }
.bar.red { background: #ff0000; }
.a-letter { font-size: 14px; line-height: 18px; }

.combo {
  height: 22px;
  display: flex;
  align-items: center;
  justify-content: space-between;
  flex: none;
  padding: 0 4px 0 2px;
  background: #fff;
  border: 1px solid #c8c6c4;
  font-size: 11.400px;
  color: #333;
}
.w-font { width: 123px; }
.w-size { width: 43px; margin: 0 1px 0 2px; }
.w-num { width: 140px; }

.font-grow { font-size: 17px; position: relative; width: 26px; }
.font-shrink { font-size: 14px; position: relative; }
.caret {
  width: 4px;
  height: 4px;
  margin-left: 1px;
  margin-top: -6px;
  border-right: 1px solid #2b88d8;
  border-bottom: 1px solid #2b88d8;
  transform: rotate(45deg);
}
.caret.up { transform: rotate(225deg); }
.bold { font-weight: 700; font-size: 14px; }
.plain { color: #666; font-style: italic; }
.under { text-decoration: underline; text-underline-offset: 2px; }
.pct { font-size: 21px; width: 27px; font-weight: 300; }
.thousand { font-size: 9.500px; width: 24px; color: #666; }
.dec-tool {
  flex-direction: column;
  align-items: flex-end;
  padding-right: 4px;
}
.dec-row {
  height: 11px;
  display: flex;
  align-items: center;
  gap: 1px;
  font: 9.500px/11px "Liberation Sans", sans-serif;
}

.lines { width: 14px; height: 14px; fill: none; stroke: #444; }
.lines .blue { stroke: #2b88d8; }

.sort-ico { position: relative; padding-left: 15px; gap: 0; }
.sort-ico svg { margin-top: 6px; }
.az {
  position: absolute;
  left: 2px;
  top: 3px;
  width: 12px;
  display: flex;
  flex-direction: column;
  align-items: center;
  font: 14px/15px "Liberation Sans", sans-serif;
}
.az-a { color: #2b88d8; }

.collapse {
  position: absolute;
  right: 12px;
  bottom: 0;
}

/* Formula bar */
.formula-bar {
  height: 47px;
  flex: none;
  display: flex;
  align-items: flex-start;
  padding-top: 12px;
  background: #e6e6e6;
}
.name-box {
  width: 150px;
  height: 25px;
  margin-left: 5px;
  position: relative;
  background: #fff;
  border: 1px solid #c8c8c8;
}
.tri {
  position: absolute;
  left: 135px;
  top: 9px;
  width: 0;
  height: 0;
  border-left: 4px solid transparent;
  border-right: 4px solid transparent;
  border-top: 5px solid #777;
}
.grip {
  width: 2px;
  height: 12px;
  margin: 7px 15px 0 14px;
  background: repeating-linear-gradient(to bottom, #a5a5a5 0 2px, transparent 2px 5px);
  flex: none;
}
.fx-box {
  width: 109px;
  height: 25px;
  display: flex;
  align-items: center;
  justify-content: space-between;
  padding: 0 12px 0 10px;
  background: #fff;
  border: 1px solid #c8c8c8;
  flex: none;
}
.fx {
  font: italic 13px "Liberation Serif", serif;
  color: #555;
}
.formula-input {
  width: 1376px;
  height: 25px;
  margin-left: 4px;
  display: flex;
  align-items: center;
  justify-content: flex-end;
  padding-right: 6px;
  background: #fff;
  border: 1px solid #c8c8c8;
  flex: none;
}

/* Sheet */
.sheet-wrap {
  flex: 1;
  min-height: 0;
  display: flex;
  background: #e6e6e6;
}
.sheet {
  width: 1660px;
  flex: none;
  display: flex;
  flex-direction: column;
  overflow: hidden;
  border-right: 1px solid #9f9f9f;
  border-bottom: 1px solid #9f9f9f;
}
.col-headers {
  height: 20px;
  flex: none;
  display: flex;
  background: #e6e6e6;
  border-bottom: 1px solid #9f9f9f;
}
.corner {
  width: 26px;
  flex: none;
  position: relative;
}
.corner i {
  position: absolute;
  right: 3px;
  bottom: 2px;
  border-left: 12px solid transparent;
  border-bottom: 12px solid #c0c0c0;
}
.col {
  width: 64px;
  flex: none;
  text-align: center;
  line-height: 19px;
  font-size: 13.500px;
  color: #111;
  border-right: 1px solid #b8b8b8;
}
.col.sel { background: #d2d2d2; color: #217346; }
.sheet-body {
  flex: 1;
  min-height: 0;
  display: flex;
}
.row-headers {
  width: 26px;
  flex: none;
  background: #e6e6e6;
  border-right: 1px solid #9f9f9f;
}
.row {
  height: 20px;
  text-align: center;
  line-height: 21px;
  font-size: 13.500px;
  color: #111;
  border-bottom: 1px solid #c4c4c4;
}
.row.sel { background: #d2d2d2; color: #217346; }
.cells {
  flex: 1;
  position: relative;
  background-color: #fff;
  background-image:
    repeating-linear-gradient(to right, transparent 0 63px, #d4d4d4 63px 64px),
    repeating-linear-gradient(to bottom, transparent 0 19px, #d4d4d4 19px 20px);
}
.cursor {
  position: absolute;
  left: -2px;
  top: -2px;
  width: 67px;
  height: 23px;
  border: 2px solid #217346;
}
.cursor i {
  position: absolute;
  right: -3px;
  bottom: -3px;
  width: 6px;
  height: 6px;
  background: #217346;
  border: 1px solid #fff;
}
.vscroll {
  width: 20px;
  flex: none;
  display: flex;
  flex-direction: column;
  padding: 2px 3px 0 2px;
  background: #e6e6e6;
}
.sb-btn {
  height: 15px;
  flex: none;
  position: relative;
  background: #fff;
  border: 1px solid #ababab;
}
.sb-btn:last-child { height: 14px; }
.sb-btn .tri { left: 2px; top: 4px; }
.sb-btn .tri.up {
  border-top: 0;
  border-bottom: 5px solid #777;
}
.sb-thumb {
  height: 700px;
  flex: none;
  background: #fff;
  border: 1px solid #ababab;
}
.sb-track {
  height: 22px;
  flex: none;
  background: #d2d2d2;
}

/* Sheet tabs */
.sheet-tabs {
  height: 29px;
  flex: none;
  display: flex;
  background: #e6e6e6;
  border-bottom: 1px solid #c8c8c8;
}
.nav-arrows {
  width: 100px;
  flex: none;
  display: flex;
  align-items: center;
  gap: 25px;
  padding-left: 26px;
}
.arrow {
  width: 0;
  height: 0;
  border-top: 4px solid transparent;
  border-bottom: 4px solid transparent;
}
.arrow.left { border-right: 5px solid #c4c4c4; }
.arrow.right { border-left: 5px solid #c4c4c4; }
.arrow.left.dark { border-right-color: #666; }
.arrow.right.dark { border-left-color: #666; }
.sheet-tab {
  width: 70px;
  height: 25px;
  flex: none;
  text-align: center;
  line-height: 27px;
  font-size: 13px;
  font-weight: 700;
  color: #217346;
  background: #fff;
  border-left: 1px solid #9f9f9f;
  border-right: 1px solid #9f9f9f;
  border-bottom: 2px solid #217346;
}
.add-sheet {
  width: 16px;
  height: 16px;
  margin: 6px 0 0 33px;
  flex: none;
}
.tabs-grip { margin: 8px 14px 0 791px; }
.hscroll {
  width: 634px;
  height: 15px;
  margin-top: 7px;
  flex: none;
  display: flex;
  background: #d2d2d2;
  border: 1px solid #ababab;
}
.hs-btn {
  width: 13px;
  flex: none;
  display: flex;
  align-items: center;
  justify-content: center;
  background: #fff;
}
.hs-thumb {
  width: 579px;
  flex: none;
  background: #fff;
  border-left: 1px solid #ababab;
  border-right: 1px solid #ababab;
}
.hs-track { flex: 1; }

/* Status bar */
.statusbar {
  height: 21px;
  flex: none;
  display: flex;
  align-items: center;
  background: #f3f2f1;
}
.status-text {
  margin-left: 7px;
  width: 55px;
  flex: none;
  font-size: 11.400px;
}
.macro { flex: none; }
.views {
  display: flex;
  height: 21px;
  margin-left: auto;
}
.view {
  width: 40px;
  display: flex;
  align-items: center;
  justify-content: center;
}
.view.on { background: #d2d0ce; }
.zoom {
  display: flex;
  align-items: center;
  margin: 0 8px 0 0;
}
.z-sign {
  width: 20px;
  text-align: center;
  font-size: 14px;
  color: #555;
}
.z-sign.plus { width: 18px; }
.z-track {
  width: 100px;
  height: 1px;
  position: relative;
  background: #a8a8a8;
}
.z-track i {
  position: absolute;
  left: 47px;
  top: -7px;
  width: 4px;
  height: 14px;
  background: #777;
}
.z-pct {
  width: 34px;
  text-align: right;
  font-size: 11px;
}
.desktop-edge {
  height: 2px;
  flex: none;
  background: #e0d9d9;
}

/* Dialog */
.dialog {
  position: absolute;
  left: 583px;
  top: 452px;
  width: 529px;
  height: 160px;
  display: flex;
  flex-direction: column;
  background: #f0f0f0;
  border: 1px solid #7a7a7a;
  box-shadow: 0 2px 10px rgba(0,0,0,0.3);
  z-index: 5;
  color: #000;
}
.dialog-title {
  height: 30px;
  flex: none;
  display: flex;
  align-items: center;
  justify-content: space-between;
  padding: 0 9px 0 8px;
  background: #fff;
  font-size: 11.600px;
}
.dialog-body {
  flex: 1;
  display: flex;
  padding: 13px 0 0 17px;
}
.warn { margin: 23px 16px 0 0; flex: none; }
.dialog-text { font-size: 11.100px; white-space: nowrap; }
.dialog-text p {
  margin: 0;
  line-height: 13px;
}
.dialog-text .lead { margin-bottom: 13px; }
.glyphs { word-spacing: 1px; }
.dialog-foot {
  height: 26px;
  flex: none;
  display: flex;
  justify-content: center;
  padding-left: 2px;
}
.ok {
  width: 85px;
  height: 20px;
  padding: 0;
  background: #e1e1e1;
  border: 2px solid #0078d7;
  color: #000;
  font: 11px "Open Sans", sans-serif;
}
```
